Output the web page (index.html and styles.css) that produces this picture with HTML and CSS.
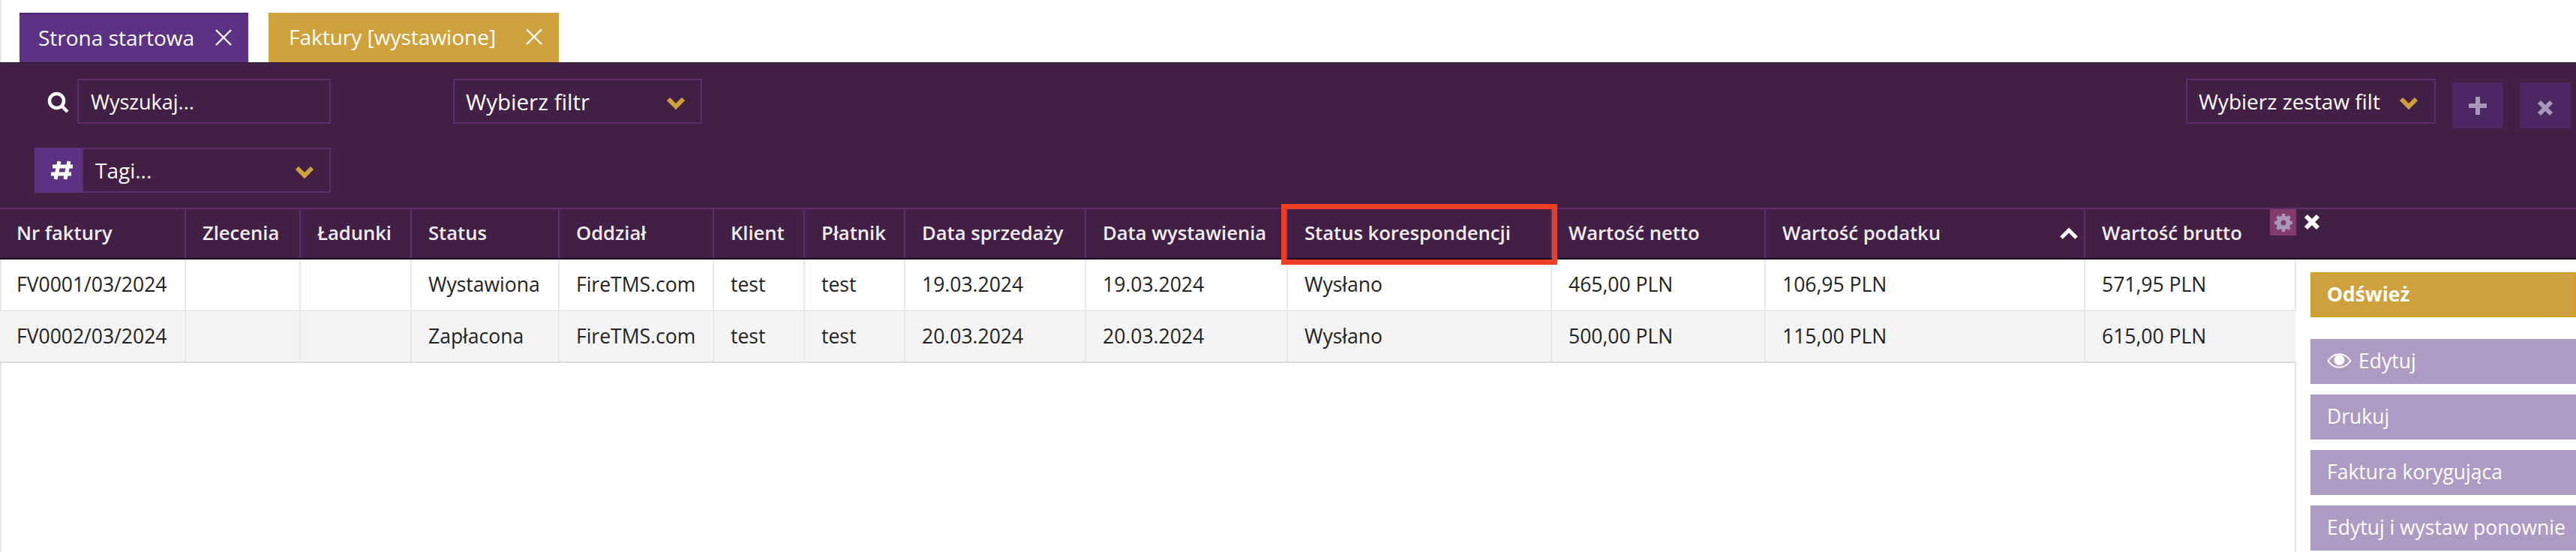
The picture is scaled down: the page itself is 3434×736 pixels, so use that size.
FILE: index.html
```html
<!DOCTYPE html>
<html lang="pl">
<head>
    <meta charset="UTF-8">
    <title>Faktury [wystawione]</title>
    <link rel="stylesheet" href="styles.css">
</head>
<body>
    <div class="tabs">
        <div class="tab tab-purple">
            <span class="tab-label">Strona startowa</span>
            <svg class="tab-close" viewBox="0 0 24 22"><path d="M2 1 L22 21 M22 1 L2 21"/></svg>
        </div>
        <div class="tab tab-gold">
            <span class="tab-label">Faktury [wystawione]</span>
            <svg class="tab-close" viewBox="0 0 24 22"><path d="M2 1 L22 21 M22 1 L2 21"/></svg>
        </div>
    </div>

    <div class="filters">
        <div class="filter-row">
            <svg class="search-icon" viewBox="0 0 30 30"><circle cx="12.5" cy="12.5" r="9.5"/><path d="M19.5 19.5 L27 27"/></svg>
            <div class="field field-search">Wyszukaj...</div>
            <div class="field field-filter">
                <span class="field-text">Wybierz filtr</span>
                <svg class="chevron" viewBox="0 0 26 18"><path d="M3 3 L13 13 L23 3"/></svg>
            </div>
            <div class="field field-set">
                <span class="field-text">Wybierz zestaw filt</span>
                <svg class="chevron" viewBox="0 0 26 18"><path d="M3 3 L13 13 L23 3"/></svg>
            </div>
            <div class="square-btn">
                <svg class="square-icon" viewBox="0 0 26 26"><path d="M13 1 V25 M1 13 H25"/></svg>
            </div>
            <div class="square-btn square-last">
                <svg class="square-icon square-icon-x" viewBox="0 0 22 22"><path d="M3 3 L19 19 M19 3 L3 19"/></svg>
            </div>
        </div>
        <div class="filter-row filter-row-tags">
            <div class="tag-hash">
                <svg class="hash-icon" viewBox="0 0 32 28"><path d="M12 2 L7 26 M25 2 L20 26 M3 9 H30 M1 19 H28"/></svg>
            </div>
            <div class="field field-tags">
                <span class="field-text">Tagi...</span>
                <svg class="chevron" viewBox="0 0 26 18"><path d="M3 3 L13 13 L23 3"/></svg>
            </div>
        </div>
    </div>

    <div class="grid-head">
        <div class="grid-cols">
            <div class="head-cell">Nr faktury</div>
            <div class="head-cell">Zlecenia</div>
            <div class="head-cell">Ładunki</div>
            <div class="head-cell">Status</div>
            <div class="head-cell">Oddział</div>
            <div class="head-cell">Klient</div>
            <div class="head-cell">Płatnik</div>
            <div class="head-cell">Data sprzedaży</div>
            <div class="head-cell">Data wystawienia</div>
            <div class="head-cell">Status korespondencji</div>
            <div class="head-cell">Wartość netto</div>
            <div class="head-cell head-sorted">
                Wartość podatku
                <svg class="sort-icon" viewBox="0 0 26 18"><path d="M3 15 L13 5 L23 15"/></svg>
            </div>
            <div class="head-cell">Wartość brutto</div>
        </div>
        <div class="head-tools">
            <div class="gear-box">
                <svg class="gear-icon" viewBox="0 0 24 24">
                    <circle class="gear-ring" cx="12" cy="12" r="6"/>
                    <path class="gear-teeth" d="M12 1 V5 M12 19 V23 M1 12 H5 M19 12 H23 M4.2 4.2 L7 7 M17 17 L19.8 19.8 M19.8 4.2 L17 7 M7 17 L4.2 19.8"/>
                </svg>
            </div>
            <svg class="close-all" viewBox="0 0 24 24"><path d="M4 4 L20 20 M20 4 L4 20"/></svg>
        </div>
    </div>

    <div class="grid-body">
        <div class="rows">
            <div class="grid-cols row">
                <div class="cell">FV0001/03/2024</div>
                <div class="cell"></div>
                <div class="cell"></div>
                <div class="cell">Wystawiona</div>
                <div class="cell">FireTMS.com</div>
                <div class="cell">test</div>
                <div class="cell">test</div>
                <div class="cell">19.03.2024</div>
                <div class="cell">19.03.2024</div>
                <div class="cell">Wysłano</div>
                <div class="cell">465,00 PLN</div>
                <div class="cell">106,95 PLN</div>
                <div class="cell">571,95 PLN</div>
            </div>
            <div class="grid-cols row row-alt">
                <div class="cell">FV0002/03/2024</div>
                <div class="cell"></div>
                <div class="cell"></div>
                <div class="cell">Zapłacona</div>
                <div class="cell">FireTMS.com</div>
                <div class="cell">test</div>
                <div class="cell">test</div>
                <div class="cell">20.03.2024</div>
                <div class="cell">20.03.2024</div>
                <div class="cell">Wysłano</div>
                <div class="cell">500,00 PLN</div>
                <div class="cell">115,00 PLN</div>
                <div class="cell">615,00 PLN</div>
            </div>
        </div>
        <div class="side">
            <div class="side-btn side-refresh">Odśwież</div>
            <div class="side-btn side-first">
                <svg class="eye-icon" viewBox="0 0 33 20">
                    <path class="eye-outline" d="M1.5 10 C6 3.5 11 1.2 16.5 1.2 C22 1.2 27 3.5 31.5 10 C27 16.5 22 18.8 16.5 18.8 C11 18.8 6 16.5 1.5 10 Z"/>
                    <circle class="eye-pupil" cx="16.5" cy="9" r="7"/>
                </svg>
                Edytuj
            </div>
            <div class="side-btn">Drukuj</div>
            <div class="side-btn">Faktura korygująca</div>
            <div class="side-btn">Edytuj i wystaw ponownie</div>
        </div>
    </div>

    <!-- zaznaczenie kolumny -->
    <div class="highlight"></div>
</body>
</html>
```

FILE: styles.css
```css
html, body {
    height: 100%;
}
body {
    margin: 0;
    background-color: white;
    font-family: "Open Sans", sans-serif;
    font-size: 26.5px;
    color: #222;
    overflow: hidden;
    position: relative;
}

/* zakladki */
.tabs {
    display: flex;
    gap: 27px;
    height: 66px;
    padding: 17px 0 0 24px;
    border-left: 2px solid #e4e4e4;
}
.tab {
    display: flex;
    align-items: center;
    justify-content: space-between;
    color: white;
    font-size: 28px;
    box-sizing: border-box;
    height: 66px;
    padding-bottom: 3px;
}
.tab-purple {
    width: 305px;
    padding-left: 25px;
    padding-right: 21px;
    background-color: #5c3384;
    border-top: 2px solid #4b2575;
}
.tab-gold {
    width: 387px;
    padding-left: 27px;
    padding-right: 21px;
    background-color: #cfa13c;
}
.tab-label {
    white-space: nowrap;
}
.tab-close {
    width: 24px;
    height: 22px;
    fill: none;
    stroke: white;
    stroke-width: 2.4;
}

/* filtry */
.filters {
    background-color: #421f44;
    border-top: 1px solid #2c1230;
    box-sizing: border-box;
    height: 194px;
    padding-top: 21px;
}
.filter-row {
    display: flex;
    height: 60px;
}
.filter-row-tags {
    margin-top: 32px;
    padding-left: 46px;
}
.search-icon {
    width: 30px;
    height: 30px;
    margin: 17px 10px 0 63px;
    fill: none;
    stroke: white;
    stroke-width: 4.5;
}
.field {
    display: flex;
    align-items: center;
    justify-content: space-between;
    box-sizing: border-box;
    border: 2px solid #5f2d6b;
    color: white;
    white-space: nowrap;
}
.field-search {
    width: 338px;
    padding-left: 16px;
    font-size: 27px;
}
.field-filter {
    width: 332px;
    margin-left: 163px;
    padding: 0 20px 0 15px;
    font-size: 29.5px;
}
.field-set {
    width: 333px;
    margin-left: auto;
    padding: 0 21px 0 15px;
    font-size: 28px;
}
.field-set .field-text {
    width: 247px;
    overflow: hidden;
}
.field-tags {
    width: 332px;
    padding: 0 20px 0 16px;
    font-size: 28px;
}
.chevron {
    width: 26px;
    height: 18px;
    margin-top: 6px;
    flex: none;
    fill: none;
    stroke: #cfa13c;
    stroke-width: 6;
}
.square-btn {
    display: flex;
    align-items: center;
    justify-content: center;
    width: 68px;
    height: 61px;
    margin: 5px 0 0 22px;
    background-color: #4c2763;
}
.square-last {
    margin-right: 7px;
}
.square-icon {
    width: 26px;
    height: 26px;
    fill: none;
    stroke: #a898b8;
    stroke-width: 6;
}
.square-icon-x {
    width: 22px;
    height: 22px;
    margin-top: 6px;
}
.tag-hash {
    display: flex;
    align-items: center;
    justify-content: center;
    width: 63px;
    padding-left: 10px;
    box-sizing: border-box;
    background-color: #5c3384;
}
.hash-icon {
    width: 32px;
    height: 28px;
    fill: none;
    stroke: white;
    stroke-width: 5;
}

/* naglowek tabeli */
.grid-cols {
    display: grid;
    grid-template-columns: 248px 153px 148px 197px 206px 121px 134px 241px 269px 352px 285px 426px 281px;
    width: 3061px;
    flex: none;
}
.grid-head {
    display: flex;
    height: 69px;
    box-sizing: border-box;
    background-color: #421f44;
    border-top: 2px solid #5f2d6b;
    border-bottom: 2px solid #160a1c;
}
.head-cell {
    display: flex;
    align-items: center;
    box-sizing: border-box;
    padding-left: 22px;
    padding-bottom: 2px;
    color: #f2eef2;
    font-weight: 600;
    font-size: 25.6px;
    white-space: nowrap;
    border-right: 2px solid #5f2d6b;
}
.head-cell:nth-child(13) {
    border-right: none;
}
.head-sorted {
    justify-content: space-between;
    padding-right: 7px;
}
.sort-icon {
    width: 26px;
    height: 18px;
    fill: none;
    stroke: white;
    stroke-width: 5;
}
.head-tools {
    display: flex;
    align-items: flex-start;
    margin-left: -35px;
    position: relative;
}
.gear-box {
    display: flex;
    align-items: center;
    justify-content: center;
    width: 35px;
    height: 35px;
    background-color: #853a6e;
}
.gear-icon {
    width: 26px;
    height: 26px;
    fill: none;
    stroke: #a898b8;
}
.gear-ring {
    stroke-width: 5.5;
}
.gear-teeth {
    stroke-width: 4;
}
.close-all {
    width: 24px;
    height: 24px;
    margin: 5px 0 0 9px;
    fill: none;
    stroke: white;
    stroke-width: 6;
}

/* wiersze */
.grid-body {
    display: flex;
    height: 390px;
}
.rows {
    width: 3061px;
    box-sizing: border-box;
    flex: none;
    border-right: 2px solid #e4e4e4;
    border-left: 2px solid #e4e4e4;
}
.row {
    margin-left: -2px;
    height: 69px;
    box-sizing: border-box;
    border-bottom: 2px solid #e8e8e8;
}
.row-alt {
    background-color: #f4f4f4;
    border-bottom: 2px solid #dcdcdc;
}
.cell {
    display: flex;
    align-items: center;
    box-sizing: border-box;
    padding-left: 22px;
    padding-bottom: 2px;
    white-space: nowrap;
    border-right: 2px solid #e8e8e8;
}
.cell:nth-child(13) {
    border-right: none;
}

/* przyciski po prawej */
.side {
    flex: 1;
    display: flex;
    flex-direction: column;
    gap: 14px;
    padding: 17px 0 0 19px;
}
.side-btn {
    display: flex;
    align-items: center;
    gap: 9px;
    flex: none;
    height: 60px;
    padding-left: 22px;
    padding-bottom: 2px;
    box-sizing: border-box;
    color: white;
    background-color: #ae9bc3;
    white-space: nowrap;
}
.side-refresh {
    font-weight: 700;
    background-color: #cfa13c;
    border: 2px solid #d29f1e;
    padding-left: 20px;
    margin-bottom: 15px;
}
.eye-icon {
    width: 33px;
    height: 20px;
}
.eye-outline {
    fill: none;
    stroke: white;
    stroke-width: 2;
}
.eye-pupil {
    fill: white;
}

/* czerwona ramka na zrzucie */
.highlight {
    position: absolute;
    left: 1708px;
    top: 272px;
    width: 368px;
    height: 81px;
    box-sizing: border-box;
    border: 7px solid #ee3e23;
}
```
